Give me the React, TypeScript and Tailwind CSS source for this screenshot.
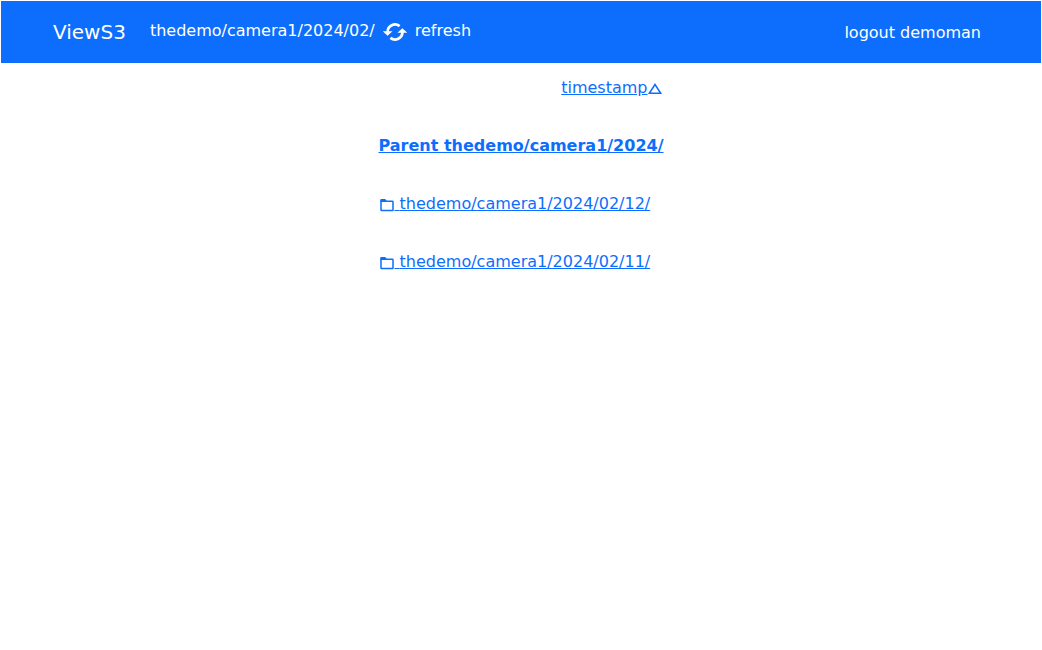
import type { ReactNode } from 'react';

function SyncIcon() {
  return (
    <svg className="size-6 shrink-0" viewBox="0 0 24 24" fill="none" stroke="currentColor" strokeWidth="2.7" aria-hidden="true">
      <path d="M4.600 12A7.400 7.400 0 0 1 16.600 6.100" />
      <path d="M19.400 12A7.400 7.400 0 0 1 7.400 17.900" />
      <path d="M-.3 11.200h9.800L4.600 15.700z" fill="currentColor" stroke="none" />
      <path d="M24.300 12.800h-9.800l4.900-4.500z" fill="currentColor" stroke="none" />
    </svg>
  );
}

function FolderIcon() {
  return (
    <svg className="inline-block size-4 align-[-4px]" viewBox="0 0 16 16" fill="none" stroke="currentColor" aria-hidden="true">
      <path d="M2 3.5V13q0 .6.6.6h10.800q.6 0 .6-.6V4.800q0-.6-.6-.6H2" strokeWidth="1.5" />
      <path d="M1.250 4.800V3q0-1 1-1h4l1.500 2v.8z" fill="currentColor" stroke="none" />
    </svg>
  );
}

function TriangleIcon() {
  return (
    <svg className="-ml-px inline-block size-4 align-[-4px]" viewBox="0 0 16 16" fill="none" stroke="currentColor" strokeWidth="1.5" aria-hidden="true">
      <path d="M8 3.500 13.700 12.300H2.300z" />
    </svg>
  );
}

function ListRow({ children, align = 'text-left' }: { children: ReactNode; align?: string }) {
  return <li className={align}>{children}</li>;
}

const folders = ['thedemo/camera1/2024/02/12/', 'thedemo/camera1/2024/02/11/'];

export default function App() {
  return (
    <div className="font-['DejaVu_Sans',sans-serif] text-base">
      <header className="mx-px mt-px flex items-center justify-between bg-[#0d6efd] py-4 pr-15 pl-13 text-white">
        <nav className="flex items-center">
          <a href="#" className="mr-6 text-xl leading-[30px]">ViewS3</a>
          <span className="mr-2 pb-0.5 leading-6">thedemo/camera1/2024/02/</span>
          <button type="button" className="flex items-center gap-2">
            <SyncIcon />
            <span className="pb-0.5 leading-6">refresh</span>
          </button>
        </nav>
        <a href="#" className="pt-0.5">logout demoman</a>
      </header>
      <main className="flex justify-center pt-[13px] text-[#0d6efd]">
        <ul className="flex flex-col gap-[34px]">
          <ListRow align="pr-px text-right">
            <button type="button" className="whitespace-nowrap">
              <span className="underline">timestamp</span>
              <TriangleIcon />
            </button>
          </ListRow>
          <ListRow>
            <a href="#" className="font-bold underline">Parent thedemo/camera1/2024/</a>
          </ListRow>
          {folders.map((path) => (
            <ListRow key={path}>
              <a href="#" className="underline">
                <FolderIcon /> {path}
              </a>
            </ListRow>
          ))}
        </ul>
      </main>
    </div>
  );
}
